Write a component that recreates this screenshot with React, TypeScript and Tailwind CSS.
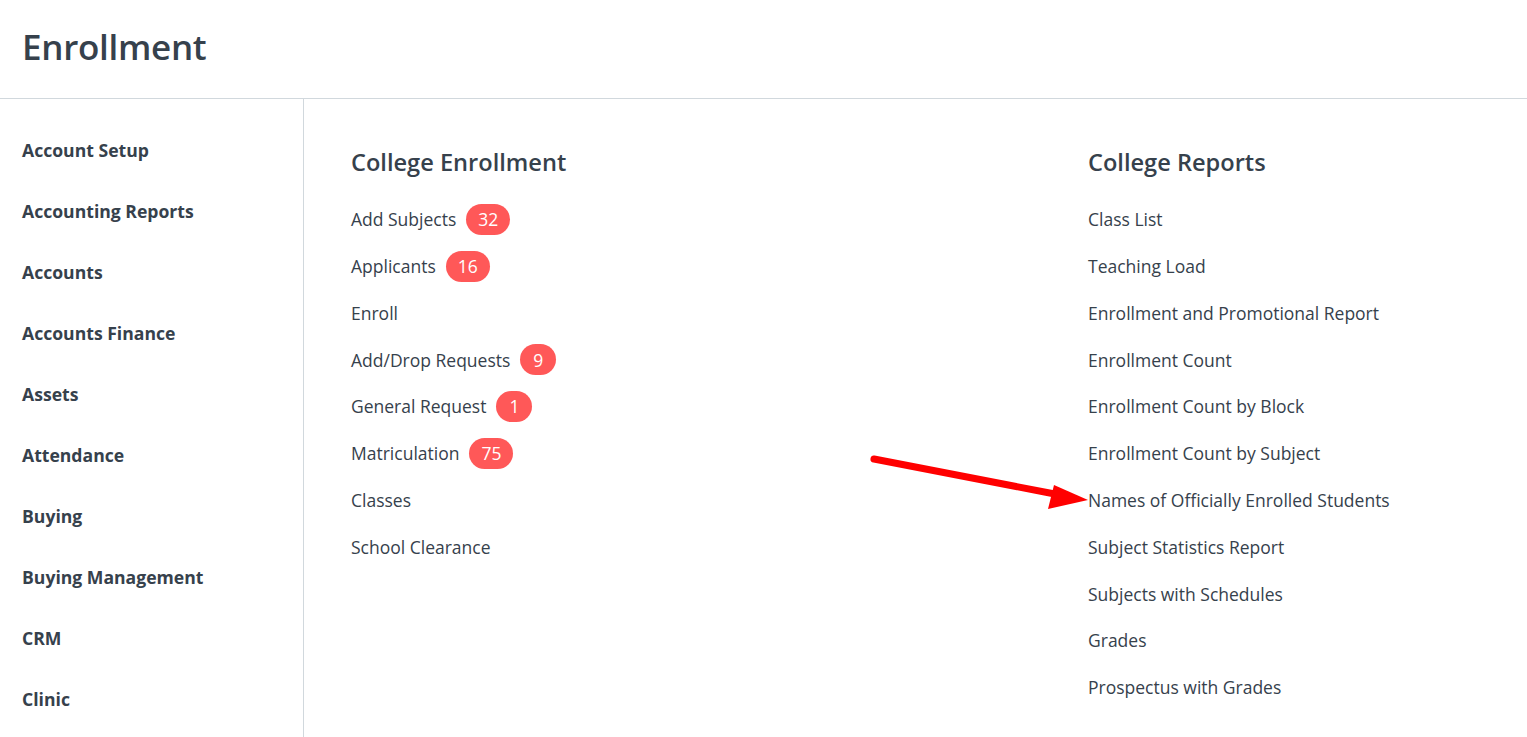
import React from "react";

type LinkItem = { label: string; count?: number };

const SIDEBAR = [
  "Account Setup",
  "Accounting Reports",
  "Accounts",
  "Accounts Finance",
  "Assets",
  "Attendance",
  "Buying",
  "Buying Management",
  "CRM",
  "Clinic",
];

const ENROLLMENT: LinkItem[] = [
  { label: "Add Subjects", count: 32 },
  { label: "Applicants", count: 16 },
  { label: "Enroll" },
  { label: "Add/Drop Requests", count: 9 },
  { label: "General Request", count: 1 },
  { label: "Matriculation", count: 75 },
  { label: "Classes" },
  { label: "School Clearance" },
];

const REPORTS: LinkItem[] = [
  { label: "Class List" },
  { label: "Teaching Load" },
  { label: "Enrollment and Promotional Report" },
  { label: "Enrollment Count" },
  { label: "Enrollment Count by Block" },
  { label: "Enrollment Count by Subject" },
  { label: "Names of Officially Enrolled Students" },
  { label: "Subject Statistics Report" },
  { label: "Subjects with Schedules" },
  { label: "Grades" },
  { label: "Prospectus with Grades" },
];

export default function App() {
  return (
    <div
      className="relative h-[737px] w-[1527px] overflow-hidden bg-white text-[#36414c]"
      style={{ fontFamily: '"Open Sans", "Noto Sans", sans-serif' }}
    >
      <header className="flex h-[99px] items-center border-b border-[#d1d8dd] px-[22px]">
        <h1 className="pb-[3px] text-[35px] font-semibold tracking-[-0.3px]">Enrollment</h1>
      </header>
      <div className="flex h-[638px]">
        <aside className="w-[304px] shrink-0 border-r border-[#d1d8dd] pt-[21px]">
          {SIDEBAR.map(s => (
            <div key={s} className="flex h-[61px] items-center px-[22px] text-[17.6px] font-bold">
              {s}
            </div>
          ))}
        </aside>
        <main className="grid flex-1 grid-cols-[737px_1fr] pl-[47px] pt-[46px]">
          <Column title="College Enrollment" items={ENROLLMENT} />
          <Column title="College Reports" items={REPORTS} />
        </main>
      </div>
      {/* annotation arrow */}
      <svg className="absolute left-0 top-0" width="1527" height="737">
        <line x1="874" y1="459" x2="1060" y2="495" stroke="#ff0000" strokeWidth="7" strokeLinecap="round" />
        <polygon points="1088,500 1054,485 1048,509" fill="#ff0000" />
      </svg>
    </div>
  );
}

function Column({ title, items }: { title: string; items: LinkItem[] }) {
  return (
    <div>
      <h2 className="mb-[17px] h-[34px] text-[23.6px] font-semibold leading-[34px]">{title}</h2>
      <div className="flex flex-col">
        {items.map(it => (
          <div key={it.label} className="flex h-[46.8px] items-center gap-[10px] text-[17.5px]">
            <span>{it.label}</span>
            {it.count !== undefined && (
              <span className="flex h-[31px] min-w-[36px] items-center justify-center rounded-full bg-[#ff5858] px-[12px] text-[17.5px] text-white">
                {it.count}
              </span>
            )}
          </div>
        ))}
      </div>
    </div>
  );
}
